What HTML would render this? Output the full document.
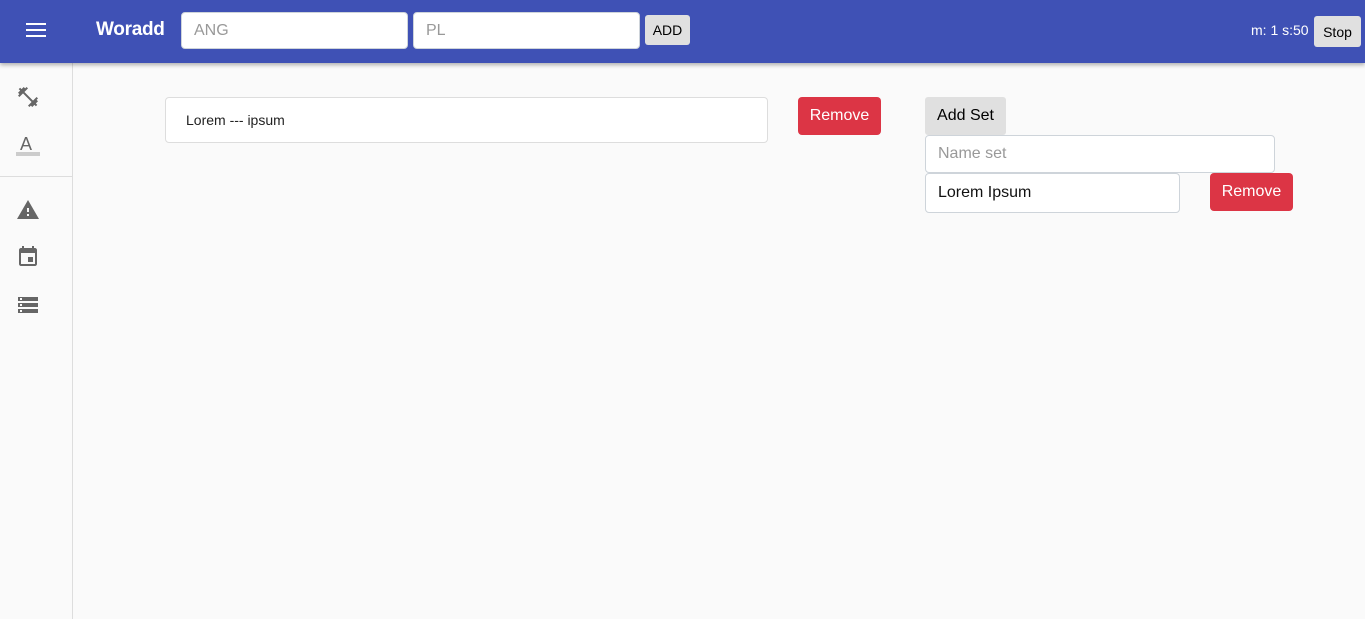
<!DOCTYPE html>
<html><head><style>
*{box-sizing:border-box;margin:0;padding:0}
body{width:1365px;height:619px;background:#fafafa;font-family:"Liberation Sans",Roboto,sans-serif;position:relative;overflow:hidden}
.top{position:absolute;left:0;top:0;width:1365px;height:63px;background:#3f51b5;box-shadow:0 2px 4px rgba(0,0,0,.3);z-index:2}
.abs{position:absolute}
.inp{position:absolute;background:#fff;border:1px solid #ced4da;border-radius:4px;font-size:16px;color:#999;padding-left:12px;display:flex;align-items:center}
.side{position:absolute;left:0;top:63px;width:73px;height:556px;border-right:1px solid #ddd;background:#fafafa}
.btnr{position:absolute;background:#dc3545;color:#fff;border-radius:4px;font-size:16px;display:flex;align-items:center;justify-content:center}
</style></head><body>
<div class="top">
 <div class="abs" style="left:26px;top:23px;width:20px;height:2px;background:#fff;box-shadow:0 6px 0 #fff,0 12px 0 #fff"></div>
 <div class="abs" style="left:96px;top:19px;color:#fff;font-size:19px;font-weight:bold;letter-spacing:-0.3px">Woradd</div>
 <div class="inp" style="left:181px;top:12px;width:227px;height:37px">ANG</div>
 <div class="inp" style="left:413px;top:12px;width:227px;height:37px">PL</div>
 <div class="abs" style="left:645px;top:15px;width:45px;height:30px;background:#e0e0e0;border-radius:3px;font-size:14px;display:flex;align-items:center;justify-content:center">ADD</div>
 <div class="abs" style="left:1251px;top:22px;color:#fff;font-size:14px">m: 1 s:50</div>
 <div class="abs" style="left:1314px;top:16px;width:47px;height:31px;background:#e0e0e0;border-radius:3px;font-size:14px;display:flex;align-items:center;justify-content:center">Stop</div>
</div>
<div class="side">
 <svg class="abs" style="left:16px;top:22px" width="24" height="24" viewBox="0 0 24 24" fill="#666"><path d="M20.57 14.86L22 13.43 20.57 12 17 15.57 8.43 7 12 3.43 10.57 2 9.14 3.43 7.71 2 5.57 4.14 4.14 2.71 2.71 4.14l1.43 1.43L2 7.71l1.43 1.43L2 10.57 3.43 12 7 8.43 15.57 17 12 20.57 13.43 22l1.43-1.43L16.29 22l2.14-2.14 1.43 1.43 1.43-1.43-1.43-1.43L22 16.29z"/></svg>
 <div class="abs" style="left:20px;top:71px;font-size:18px;color:#666">A</div>
 <div class="abs" style="left:16px;top:89px;width:24px;height:4px;background:#ccc"></div>
 <div class="abs" style="left:0;top:113px;width:72px;height:1px;background:#ddd"></div>
 <svg class="abs" style="left:16px;top:135px" width="24" height="24" viewBox="0 0 24 24" fill="#666"><path d="M1 21h22L12 2 1 21zm12-3h-2v-2h2v2zm0-4h-2v-4h2v4z"/></svg>
 <svg class="abs" style="left:16px;top:182px" width="24" height="24" viewBox="0 0 24 24" fill="#666"><path d="M17 12h-5v5h5v-5zM16 1v2H8V1H6v2H5c-1.11 0-2 .9-2 2v14c0 1.1.89 2 2 2h14c1.1 0 2-.9 2-2V5c0-1.1-.9-2-2-2h-1V1h-2zm3 18H5V8h14v11z"/></svg>
 <svg class="abs" style="left:16px;top:230px" width="24" height="24" viewBox="0 0 24 24" fill="#666"><path d="M2 20h20v-4H2v4zm2-3h2v2H4v-2zM2 4v4h20V4H2zm4 3H4V5h2v2zm-4 7h20v-4H2v4zm2-3h2v2H4v-2z"/></svg>
</div>
<div class="inp" style="left:165px;top:97px;width:603px;height:46px;color:#222;font-size:14px;padding-left:20px;border-color:#ddd">Lorem --- ipsum</div>
<div class="btnr" style="left:798px;top:97px;width:83px;height:38px">Remove</div>
<div class="abs" style="left:925px;top:97px;width:81px;height:38px;background:#e0e0e0;border-radius:3px;font-size:16px;display:flex;align-items:center;justify-content:center">Add Set</div>
<div class="inp" style="left:925px;top:135px;width:350px;height:38px">Name set</div>
<div class="inp" style="left:925px;top:173px;width:255px;height:40px;color:#111">Lorem Ipsum</div>
<div class="btnr" style="left:1210px;top:173px;width:83px;height:38px">Remove</div>
</body></html>
